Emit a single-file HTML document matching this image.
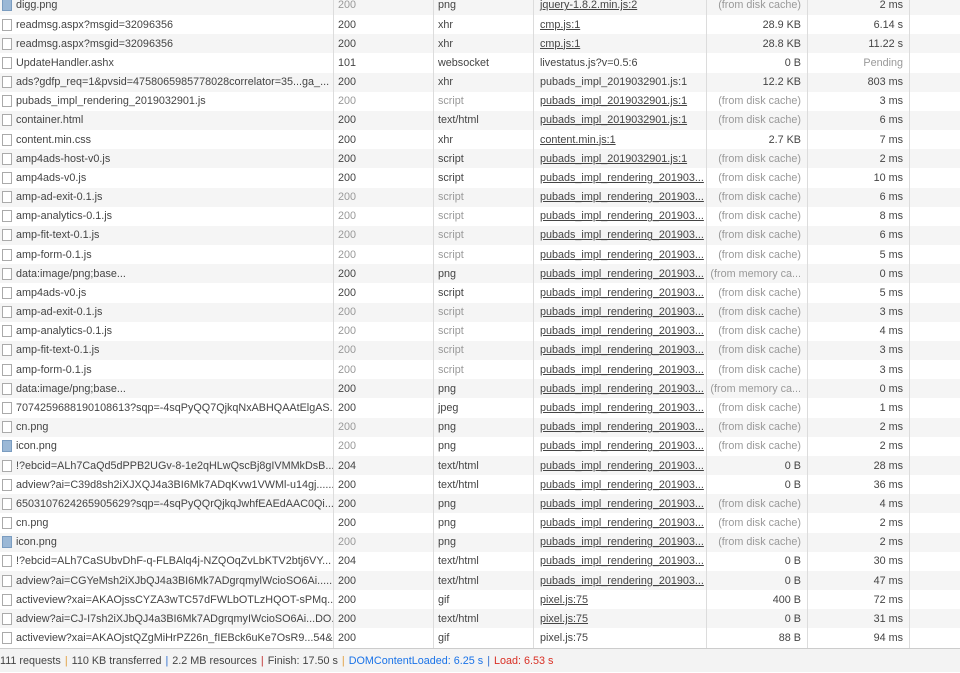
<!DOCTYPE html>
<html><head><meta charset="utf-8"><style>
html,body{margin:0;padding:0;width:960px;height:672px;overflow:hidden;background:#fff;font-family:"Liberation Sans",sans-serif;font-size:10.8px;color:#444}
.wrap{position:absolute;top:-4.2px;left:0;width:960px}
.r{height:19.18px;display:flex;align-items:center;white-space:nowrap}
.r:nth-child(odd){background:#f5f5f5}
.c{height:100%;display:flex;align-items:center;overflow:hidden;box-sizing:border-box;border-right:1px solid #dcdcdc}
.n{width:334px;padding-left:2px}
.s{width:100px;padding-left:4px}
.t{width:100px;padding-left:4px}
.i{width:173px;padding-left:6px}
.z{width:101px;justify-content:flex-end;padding-right:6px}
.m{width:102px;justify-content:flex-end;padding-right:6px}
.ic{width:8px;height:10px;border:1px solid #aaa;background:#fff;margin-right:4px;flex:none}
.ic.p{background:#9bb8d6;border-color:#7a9cc0}
.u{text-decoration:underline}
.g{color:#999}
.bar{position:absolute;left:0;top:648px;width:960px;height:24px;background:#f3f3f3;border-top:1px solid #ccc;box-sizing:border-box;font-size:10.8px;line-height:24px;white-space:nowrap;color:#444}
.sep{margin:0 4px}
</style></head><body>
<div class="wrap">
<div class="r"><div class="c n"><span class="ic p"></span>digg.png</div><div class="c s g">200</div><div class="c t">png</div><div class="c i u">jquery-1.8.2.min.js:2</div><div class="c z g">(from disk cache)</div><div class="c m">2 ms</div></div>
<div class="r"><div class="c n"><span class="ic"></span>readmsg.aspx?msgid=32096356</div><div class="c s">200</div><div class="c t">xhr</div><div class="c i u">cmp.js:1</div><div class="c z">28.9 KB</div><div class="c m">6.14 s</div></div>
<div class="r"><div class="c n"><span class="ic"></span>readmsg.aspx?msgid=32096356</div><div class="c s">200</div><div class="c t">xhr</div><div class="c i u">cmp.js:1</div><div class="c z">28.8 KB</div><div class="c m">11.22 s</div></div>
<div class="r"><div class="c n"><span class="ic"></span>UpdateHandler.ashx</div><div class="c s">101</div><div class="c t">websocket</div><div class="c i">livestatus.js?v=0.5:6</div><div class="c z">0 B</div><div class="c m g">Pending</div></div>
<div class="r"><div class="c n"><span class="ic"></span>ads?gdfp_req=1&amp;pvsid=4758065985778028correlator=35...ga_...</div><div class="c s">200</div><div class="c t">xhr</div><div class="c i">pubads_impl_2019032901.js:1</div><div class="c z">12.2 KB</div><div class="c m">803 ms</div></div>
<div class="r"><div class="c n"><span class="ic"></span>pubads_impl_rendering_2019032901.js</div><div class="c s g">200</div><div class="c t g">script</div><div class="c i u">pubads_impl_2019032901.js:1</div><div class="c z g">(from disk cache)</div><div class="c m">3 ms</div></div>
<div class="r"><div class="c n"><span class="ic"></span>container.html</div><div class="c s">200</div><div class="c t">text/html</div><div class="c i u">pubads_impl_2019032901.js:1</div><div class="c z g">(from disk cache)</div><div class="c m">6 ms</div></div>
<div class="r"><div class="c n"><span class="ic"></span>content.min.css</div><div class="c s">200</div><div class="c t">xhr</div><div class="c i u">content.min.js:1</div><div class="c z">2.7 KB</div><div class="c m">7 ms</div></div>
<div class="r"><div class="c n"><span class="ic"></span>amp4ads-host-v0.js</div><div class="c s">200</div><div class="c t">script</div><div class="c i u">pubads_impl_2019032901.js:1</div><div class="c z g">(from disk cache)</div><div class="c m">2 ms</div></div>
<div class="r"><div class="c n"><span class="ic"></span>amp4ads-v0.js</div><div class="c s">200</div><div class="c t">script</div><div class="c i u">pubads_impl_rendering_201903...</div><div class="c z g">(from disk cache)</div><div class="c m">10 ms</div></div>
<div class="r"><div class="c n"><span class="ic"></span>amp-ad-exit-0.1.js</div><div class="c s g">200</div><div class="c t g">script</div><div class="c i u">pubads_impl_rendering_201903...</div><div class="c z g">(from disk cache)</div><div class="c m">6 ms</div></div>
<div class="r"><div class="c n"><span class="ic"></span>amp-analytics-0.1.js</div><div class="c s g">200</div><div class="c t g">script</div><div class="c i u">pubads_impl_rendering_201903...</div><div class="c z g">(from disk cache)</div><div class="c m">8 ms</div></div>
<div class="r"><div class="c n"><span class="ic"></span>amp-fit-text-0.1.js</div><div class="c s g">200</div><div class="c t g">script</div><div class="c i u">pubads_impl_rendering_201903...</div><div class="c z g">(from disk cache)</div><div class="c m">6 ms</div></div>
<div class="r"><div class="c n"><span class="ic"></span>amp-form-0.1.js</div><div class="c s g">200</div><div class="c t g">script</div><div class="c i u">pubads_impl_rendering_201903...</div><div class="c z g">(from disk cache)</div><div class="c m">5 ms</div></div>
<div class="r"><div class="c n"><span class="ic"></span>data:image/png;base...</div><div class="c s">200</div><div class="c t">png</div><div class="c i u">pubads_impl_rendering_201903...</div><div class="c z g">(from memory ca...</div><div class="c m">0 ms</div></div>
<div class="r"><div class="c n"><span class="ic"></span>amp4ads-v0.js</div><div class="c s">200</div><div class="c t">script</div><div class="c i u">pubads_impl_rendering_201903...</div><div class="c z g">(from disk cache)</div><div class="c m">5 ms</div></div>
<div class="r"><div class="c n"><span class="ic"></span>amp-ad-exit-0.1.js</div><div class="c s g">200</div><div class="c t g">script</div><div class="c i u">pubads_impl_rendering_201903...</div><div class="c z g">(from disk cache)</div><div class="c m">3 ms</div></div>
<div class="r"><div class="c n"><span class="ic"></span>amp-analytics-0.1.js</div><div class="c s g">200</div><div class="c t g">script</div><div class="c i u">pubads_impl_rendering_201903...</div><div class="c z g">(from disk cache)</div><div class="c m">4 ms</div></div>
<div class="r"><div class="c n"><span class="ic"></span>amp-fit-text-0.1.js</div><div class="c s g">200</div><div class="c t g">script</div><div class="c i u">pubads_impl_rendering_201903...</div><div class="c z g">(from disk cache)</div><div class="c m">3 ms</div></div>
<div class="r"><div class="c n"><span class="ic"></span>amp-form-0.1.js</div><div class="c s g">200</div><div class="c t g">script</div><div class="c i u">pubads_impl_rendering_201903...</div><div class="c z g">(from disk cache)</div><div class="c m">3 ms</div></div>
<div class="r"><div class="c n"><span class="ic"></span>data:image/png;base...</div><div class="c s">200</div><div class="c t">png</div><div class="c i u">pubads_impl_rendering_201903...</div><div class="c z g">(from memory ca...</div><div class="c m">0 ms</div></div>
<div class="r"><div class="c n"><span class="ic"></span>7074259688190108613?sqp=-4sqPyQQ7QjkqNxABHQAAtElgAS...</div><div class="c s">200</div><div class="c t">jpeg</div><div class="c i u">pubads_impl_rendering_201903...</div><div class="c z g">(from disk cache)</div><div class="c m">1 ms</div></div>
<div class="r"><div class="c n"><span class="ic"></span>cn.png</div><div class="c s g">200</div><div class="c t">png</div><div class="c i u">pubads_impl_rendering_201903...</div><div class="c z g">(from disk cache)</div><div class="c m">2 ms</div></div>
<div class="r"><div class="c n"><span class="ic p"></span>icon.png</div><div class="c s g">200</div><div class="c t">png</div><div class="c i u">pubads_impl_rendering_201903...</div><div class="c z g">(from disk cache)</div><div class="c m">2 ms</div></div>
<div class="r"><div class="c n"><span class="ic"></span>!?ebcid=ALh7CaQd5dPPB2UGv-8-1e2qHLwQscBj8gIVMMkDsB...</div><div class="c s">204</div><div class="c t">text/html</div><div class="c i u">pubads_impl_rendering_201903...</div><div class="c z">0 B</div><div class="c m">28 ms</div></div>
<div class="r"><div class="c n"><span class="ic"></span>adview?ai=C39d8sh2iXJXQJ4a3BI6Mk7ADqKvw1VWMl-u14gj......</div><div class="c s">200</div><div class="c t">text/html</div><div class="c i u">pubads_impl_rendering_201903...</div><div class="c z">0 B</div><div class="c m">36 ms</div></div>
<div class="r"><div class="c n"><span class="ic"></span>6503107624265905629?sqp=-4sqPyQQrQjkqJwhfEAEdAAC0Qi.....</div><div class="c s">200</div><div class="c t">png</div><div class="c i u">pubads_impl_rendering_201903...</div><div class="c z g">(from disk cache)</div><div class="c m">4 ms</div></div>
<div class="r"><div class="c n"><span class="ic"></span>cn.png</div><div class="c s">200</div><div class="c t">png</div><div class="c i u">pubads_impl_rendering_201903...</div><div class="c z g">(from disk cache)</div><div class="c m">2 ms</div></div>
<div class="r"><div class="c n"><span class="ic p"></span>icon.png</div><div class="c s g">200</div><div class="c t">png</div><div class="c i u">pubads_impl_rendering_201903...</div><div class="c z g">(from disk cache)</div><div class="c m">2 ms</div></div>
<div class="r"><div class="c n"><span class="ic"></span>!?ebcid=ALh7CaSUbvDhF-q-FLBAlq4j-NZQOqZvLbKTV2btj6VY...</div><div class="c s">204</div><div class="c t">text/html</div><div class="c i u">pubads_impl_rendering_201903...</div><div class="c z">0 B</div><div class="c m">30 ms</div></div>
<div class="r"><div class="c n"><span class="ic"></span>adview?ai=CGYeMsh2iXJbQJ4a3BI6Mk7ADgrqmylWcioSO6Ai......</div><div class="c s">200</div><div class="c t">text/html</div><div class="c i u">pubads_impl_rendering_201903...</div><div class="c z">0 B</div><div class="c m">47 ms</div></div>
<div class="r"><div class="c n"><span class="ic"></span>activeview?xai=AKAOjssCYZA3wTC57dFWLbOTLzHQOT-sPMq.....</div><div class="c s">200</div><div class="c t">gif</div><div class="c i u">pixel.js:75</div><div class="c z">400 B</div><div class="c m">72 ms</div></div>
<div class="r"><div class="c n"><span class="ic"></span>adview?ai=CJ-I7sh2iXJbQJ4a3BI6Mk7ADgrqmyIWcioSO6Ai...DO...</div><div class="c s">200</div><div class="c t">text/html</div><div class="c i u">pixel.js:75</div><div class="c z">0 B</div><div class="c m">31 ms</div></div>
<div class="r"><div class="c n"><span class="ic"></span>activeview?xai=AKAOjstQZgMiHrPZ26n_fIEBck6uKe7OsR9...54&amp;...</div><div class="c s">200</div><div class="c t">gif</div><div class="c i">pixel.js:75</div><div class="c z">88 B</div><div class="c m">94 ms</div></div>
</div>
<div class="bar">111 requests<span class="sep" style="color:#e0a040">|</span>110 KB transferred<span class="sep" style="color:#3070d0">|</span>2.2 MB resources<span class="sep" style="color:#c03030">|</span>Finish: 17.50 s<span class="sep" style="color:#e0a040">|</span><span style="color:#1a73e8">DOMContentLoaded: 6.25 s</span><span class="sep" style="color:#3070d0">|</span><span style="color:#d93025">Load: 6.53 s</span></div>
</body></html>
